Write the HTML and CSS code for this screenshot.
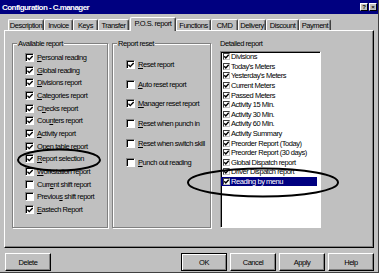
FILE: index.html
```html
<!DOCTYPE html>
<html>
<head>
<meta charset="utf-8">
<title>Configuration - C.manager</title>
<link rel="stylesheet" href="styles.css">
</head>
<body>
<div class="window">
  <div class="titlebar">
    <span class="title">Configuration - C.manager</span>
    <div class="tb-buttons"><span class="tb-btn">?</span><span class="tb-btn">×</span></div>
  </div>
  <div class="tabstrip">
    <div class="tab">Description</div>
    <div class="tab">Invoice</div>
    <div class="tab">Keys</div>
    <div class="tab">Transfer</div>
    <div class="tab active">P.O.S. report</div>
    <div class="tab">Functions</div>
    <div class="tab">CMD</div>
    <div class="tab">Delivery</div>
    <div class="tab">Discount</div>
    <div class="tab">Payment</div>
  </div>
  <div class="panel">
    <div class="group avail">
      <span class="group-title">Available report</span>
      <ul class="checklist">
        <li class="row"><span class="cb"><svg class="ck" viewBox="0 0 7 7"><path d="M0.5 3.2 L2.6 5.4 L6.6 1.2"/></svg></span><span><u>P</u>ersonal reading</span></li>
        <li class="row"><span class="cb"><svg class="ck" viewBox="0 0 7 7"><path d="M0.5 3.2 L2.6 5.4 L6.6 1.2"/></svg></span><span><u>G</u>lobal reading</span></li>
        <li class="row"><span class="cb"><svg class="ck" viewBox="0 0 7 7"><path d="M0.5 3.2 L2.6 5.4 L6.6 1.2"/></svg></span><span><u>D</u>ivisions report</span></li>
        <li class="row"><span class="cb"><svg class="ck" viewBox="0 0 7 7"><path d="M0.5 3.2 L2.6 5.4 L6.6 1.2"/></svg></span><span><u>C</u>ategories report</span></li>
        <li class="row"><span class="cb"><svg class="ck" viewBox="0 0 7 7"><path d="M0.5 3.2 L2.6 5.4 L6.6 1.2"/></svg></span><span>C<u>h</u>ecks report</span></li>
        <li class="row"><span class="cb"><svg class="ck" viewBox="0 0 7 7"><path d="M0.5 3.2 L2.6 5.4 L6.6 1.2"/></svg></span><span>Cou<u>n</u>ters report</span></li>
        <li class="row"><span class="cb"><svg class="ck" viewBox="0 0 7 7"><path d="M0.5 3.2 L2.6 5.4 L6.6 1.2"/></svg></span><span><u>A</u>ctivity report</span></li>
        <li class="row"><span class="cb"><svg class="ck" viewBox="0 0 7 7"><path d="M0.5 3.2 L2.6 5.4 L6.6 1.2"/></svg></span><span><u>O</u>pen table report</span></li>
        <li class="row"><span class="cb"><svg class="ck" viewBox="0 0 7 7"><path d="M0.5 3.2 L2.6 5.4 L6.6 1.2"/></svg></span><span><u>R</u>eport selection</span></li>
        <li class="row"><span class="cb"><svg class="ck" viewBox="0 0 7 7"><path d="M0.5 3.2 L2.6 5.4 L6.6 1.2"/></svg></span><span><u>W</u>orkstation report</span></li>
        <li class="row"><span class="cb"></span><span>Curr<u>e</u>nt shift report</span></li>
        <li class="row"><span class="cb"></span><span>Previou<u>s</u> shift report</span></li>
        <li class="row"><span class="cb"><svg class="ck" viewBox="0 0 7 7"><path d="M0.5 3.2 L2.6 5.4 L6.6 1.2"/></svg></span><span><u>E</u>astech Report</span></li>
      </ul>
    </div>
    <div class="group reset">
      <span class="group-title">Report reset</span>
      <ul class="checklist">
        <li class="row"><span class="cb"><svg class="ck" viewBox="0 0 7 7"><path d="M0.5 3.2 L2.6 5.4 L6.6 1.2"/></svg></span><span><u>R</u>eset report</span></li>
        <li class="row"><span class="cb"></span><span><u>A</u>uto reset report</span></li>
        <li class="row"><span class="cb"><svg class="ck" viewBox="0 0 7 7"><path d="M0.5 3.2 L2.6 5.4 L6.6 1.2"/></svg></span><span><u>M</u>anager reset report</span></li>
        <li class="row"><span class="cb"></span><span><u>R</u>eset when punch in</span></li>
        <li class="row"><span class="cb"></span><span><u>R</u>eset when switch skill</span></li>
        <li class="row"><span class="cb"></span><span><u>P</u>unch out reading</span></li>
      </ul>
    </div>
    <div class="detail">
      <div class="detail-title">Detailed report</div>
      <ul class="listbox">
        <li class="item"><span class="lcb"><svg class="lck" viewBox="0 0 5 5"><path d="M0.3 2.3 L1.8 3.9 L4.7 0.8"/></svg></span>Divisions</li>
        <li class="item"><span class="lcb"><svg class="lck" viewBox="0 0 5 5"><path d="M0.3 2.3 L1.8 3.9 L4.7 0.8"/></svg></span>Today's Meters</li>
        <li class="item"><span class="lcb"><svg class="lck" viewBox="0 0 5 5"><path d="M0.3 2.3 L1.8 3.9 L4.7 0.8"/></svg></span>Yesterday's Meters</li>
        <li class="item"><span class="lcb"><svg class="lck" viewBox="0 0 5 5"><path d="M0.3 2.3 L1.8 3.9 L4.7 0.8"/></svg></span>Current Meters</li>
        <li class="item"><span class="lcb"><svg class="lck" viewBox="0 0 5 5"><path d="M0.3 2.3 L1.8 3.9 L4.7 0.8"/></svg></span>Passed Meters</li>
        <li class="item"><span class="lcb"><svg class="lck" viewBox="0 0 5 5"><path d="M0.3 2.3 L1.8 3.9 L4.7 0.8"/></svg></span>Activity 15 Min.</li>
        <li class="item"><span class="lcb"><svg class="lck" viewBox="0 0 5 5"><path d="M0.3 2.3 L1.8 3.9 L4.7 0.8"/></svg></span>Activity 30 Min.</li>
        <li class="item"><span class="lcb"><svg class="lck" viewBox="0 0 5 5"><path d="M0.3 2.3 L1.8 3.9 L4.7 0.8"/></svg></span>Activity 60 Min.</li>
        <li class="item"><span class="lcb"><svg class="lck" viewBox="0 0 5 5"><path d="M0.3 2.3 L1.8 3.9 L4.7 0.8"/></svg></span>Activity Summary</li>
        <li class="item"><span class="lcb"><svg class="lck" viewBox="0 0 5 5"><path d="M0.3 2.3 L1.8 3.9 L4.7 0.8"/></svg></span>Preorder Report (Today)</li>
        <li class="item"><span class="lcb"><svg class="lck" viewBox="0 0 5 5"><path d="M0.3 2.3 L1.8 3.9 L4.7 0.8"/></svg></span>Preorder Report (30 days)</li>
        <li class="item"><span class="lcb"><svg class="lck" viewBox="0 0 5 5"><path d="M0.3 2.3 L1.8 3.9 L4.7 0.8"/></svg></span>Global Dispatch report</li>
        <li class="item"><span class="lcb"><svg class="lck" viewBox="0 0 5 5"><path d="M0.3 2.3 L1.8 3.9 L4.7 0.8"/></svg></span>Driver Dispatch report</li>
        <li class="item sel"><span class="lcb"><svg class="lck" viewBox="0 0 5 5"><path d="M0.3 2.3 L1.8 3.9 L4.7 0.8"/></svg></span>Reading by menu</li>
      </ul>
    </div>
  </div>
  <div class="buttons">
    <button class="btn">Delete</button>
    <div class="spacer"></div>
    <button class="btn default">OK</button>
    <button class="btn">Cancel</button>
    <button class="btn">Apply</button>
    <button class="btn">Help</button>
  </div>
  <svg class="annot" viewBox="0 0 379 273" width="379" height="273">
    <ellipse cx="59" cy="160" rx="41" ry="10.5"/>
    <ellipse cx="263" cy="182.5" rx="75" ry="14"/>
  </svg>
</div>
</body>
</html>
```
FILE: styles.css
```css
* { box-sizing: border-box; }
body {
  margin: 0;
  background: #c0c0c0;
  font-family: "Liberation Sans", Arial, sans-serif;
  font-size: 7.5px;
  letter-spacing: -0.45px;
  color: #000;
}
ul { list-style: none; margin: 0; padding: 0; }

.window {
  width: 379px;
  height: 273px;
  position: relative;
  background: #c0c0c0;
  border-right: 1px solid #404040;
  border-bottom: 1px solid #404040;
  overflow: hidden;
}

.titlebar {
  height: 14px;
  background: #000080;
  display: flex;
  align-items: center;
  justify-content: space-between;
  padding: 0 1px 0 2px;
}
.title { color: #fff; font-weight: bold; font-size: 8px; letter-spacing: -0.55px; }
.tb-buttons { display: flex; gap: 1px; }
.tb-btn {
  width: 8px;
  height: 8px;
  background: #c0c0c0;
  border: 1px solid;
  border-color: #fff #000 #000 #fff;
  font-size: 6px;
  font-weight: bold;
  line-height: 6px;
  letter-spacing: 0;
  text-align: center;
}

.tabstrip {
  height: 16px;
  display: flex;
  align-items: flex-end;
  padding-left: 8px;
}
.tab {
  height: 11px;
  border-top: 1px solid #fff;
  border-left: 1px solid #fff;
  border-right: 1px solid #404040;
  box-shadow: inset -1px 0 0 #808080;
  border-radius: 2px 2px 0 0;
  display: flex;
  align-items: center;
  justify-content: center;
  white-space: nowrap;
  line-height: 9px;
}
.tab:nth-child(1) { width: 36px; }
.tab:nth-child(2) { width: 29px; }
.tab:nth-child(3) { width: 25px; }
.tab:nth-child(4) { width: 31px; }
.tab:nth-child(5) { width: 46px; }
.tab:nth-child(6) { width: 35px; }
.tab:nth-child(7) { width: 27px; }
.tab:nth-child(8) { width: 28px; }
.tab:nth-child(9) { width: 33px; }
.tab:nth-child(10) { width: 32px; }
.tab.active {
  height: 14px;
  margin-bottom: -1px;
  margin-left: 1px;
  padding-bottom: 2px;
  position: relative;
  z-index: 1;
  background: #c0c0c0;
}

.panel {
  margin-left: 4px;
  width: 370px;
  height: 218px;
  border-top: 1px solid #fff;
  border-left: 1px solid #fff;
  border-right: 1px solid #000;
  border-bottom: 1px solid #000;
  box-shadow: inset -1px -1px 0 #808080;
  padding: 12px 0 0 7px;
  display: flex;
  align-items: flex-start;
}

.group {
  position: relative;
  height: 185px;
  border: 1px solid #808080;
  box-shadow: inset 1px 1px 0 #fff, 1px 1px 0 #fff;
}
.avail { width: 96px; }
.reset { width: 99px; margin-left: 4px; }
.group-title {
  position: absolute;
  top: -5px;
  left: 4px;
  padding: 0 1px;
  background: #c0c0c0;
  line-height: 9px;
  white-space: nowrap;
}

.avail .checklist { padding: 7px 0 0 12px; }
.avail .row { height: 12.7px; }
.reset .checklist { padding: 11px 0 0 13px; }
.reset .row { height: 19.6px; }
.row {
  display: flex;
  align-items: center;
  gap: 3px;
  white-space: nowrap;
}
.cb {
  flex: none;
  width: 9px;
  height: 9px;
  background: #fff;
  border: 1px solid;
  border-color: #808080 #fff #fff #808080;
  box-shadow: inset 1px 1px 0 #000;
  display: flex;
  align-items: center;
  justify-content: center;
  padding: 1px 0 0 1px;
}
.ck { width: 6px; height: 6px; display: block; }
.ck path { fill: none; stroke: #000; stroke-width: 1.6; }

.detail {
  display: flex;
  flex-direction: column;
  margin-left: 9px;
  margin-top: -4px;
}
.detail-title { line-height: 9px; height: 9px; white-space: nowrap; }
.listbox {
  margin-top: 3px;
  width: 101px;
  height: 177px;
  background: #fff;
  border: 1px solid;
  border-color: #808080 #fff #fff #808080;
  box-shadow: inset 1px 1px 0 #000;
}
.item {
  height: 9.6px;
  display: flex;
  align-items: center;
  gap: 1px;
  padding-left: 2px;
  margin-right: 3px;
  white-space: nowrap;
}
.item.sel { background: #000080; color: #fff; }
.lcb {
  flex: none;
  width: 7px;
  height: 7px;
  background: #fff;
  border: 1px solid #404040;
  border-right-color: #c0c0c0;
  border-bottom-color: #c0c0c0;
  display: flex;
  align-items: center;
  justify-content: center;
}
.lck { width: 5px; height: 5px; display: block; }
.lck path { fill: none; stroke: #000; stroke-width: 1.4; }

.buttons {
  display: flex;
  gap: 3px;
  margin-top: 5px;
  padding: 0 4px 0 5px;
}
.spacer { flex: 1; }
.btn {
  width: 46px;
  height: 18px;
  padding: 0;
  margin: 0;
  appearance: none;
  background: #c0c0c0;
  font: inherit;
  letter-spacing: inherit;
  color: #000;
  border: 1px solid;
  border-color: #fff #000 #000 #fff;
  box-shadow: inset -1px -1px 0 #808080;
}
.btn.default {
  border-color: #000;
  box-shadow: inset 1px 1px 0 #fff, inset -1px -1px 0 #808080;
}

.annot {
  position: absolute;
  left: 0;
  top: 0;
  z-index: 2;
  pointer-events: none;
}
.annot ellipse { fill: none; stroke: #000; stroke-width: 2; }
```
